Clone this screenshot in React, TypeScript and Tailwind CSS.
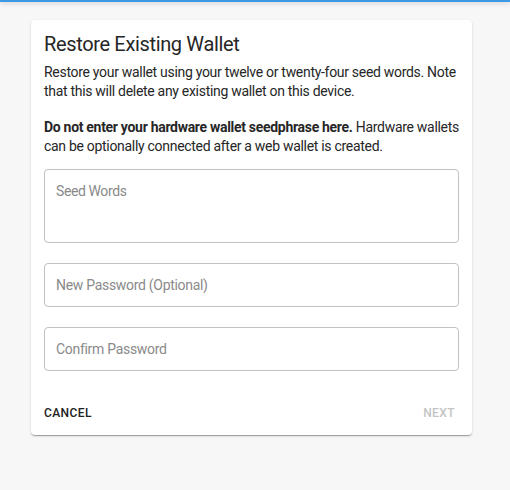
import React from "react";

const fields = [
  { label: "New Password (Optional)", type: "password" },
  { label: "Confirm Password", type: "password" },
];

export default function App() {
  return (
    <div
      className="min-h-[490px] w-[510px] bg-[#f7f7f7] text-[#212121]"
      style={{ fontFamily: "Roboto, 'Noto Sans', sans-serif" }}
    >
      <div className="h-[2px] w-full bg-[#3d98e6] shadow-[0_1px_5px_rgba(0,0,0,0.25)]" />

      <div className="ml-[31px] mt-[18px] w-[441px] rounded-[4px] bg-white px-[13px] pt-[10px] pb-[14px] shadow-[0_2px_1px_-1px_rgba(0,0,0,0.2),0_1px_1px_0_rgba(0,0,0,0.14),0_1px_3px_0_rgba(0,0,0,0.12)]">
        <h1 className="text-[20px] font-normal leading-[28px] tracking-[-0.35px] text-[#262626]">
          Restore Existing Wallet
        </h1>

        <p className="mt-[5px] text-[14px] leading-[19px] tracking-[-0.3px] text-[#262626]">
          Restore your wallet using your twelve or twenty-four seed words. Note
          that this will delete any existing wallet on this device.
        </p>
        <p className="mt-[17px] text-[14px] leading-[19px] tracking-[-0.3px] text-[#262626]">
          <span className="font-bold">
            Do not enter your hardware wallet seedphrase here.
          </span>{" "}
          Hardware wallets can be optionally connected after a web wallet is
          created.
        </p>

        <div className="mt-[13px] flex flex-col gap-[20px]">
          <textarea
            placeholder="Seed Words"
            className="block h-[74px] w-full resize-none rounded-[4px] border border-[#c2c2c2] px-[11px] py-[12px] text-[14px] leading-[19px] tracking-[-0.4px] outline-none placeholder:text-[#8a8a8a]"
          />
          {fields.map((f) => (
            <input
              key={f.label}
              type={f.type}
              placeholder={f.label}
              className="block h-[44px] w-full rounded-[4px] border border-[#c2c2c2] px-[11px] text-[14px] tracking-[-0.3px] outline-none placeholder:text-[#8a8a8a]"
            />
          ))}
        </div>

        <div className="mt-[34px] flex items-center justify-between pr-[4px] text-[12px] font-medium leading-[16px]">
          <button className="uppercase tracking-[0.4px] text-[#212121]">Cancel</button>
          <button className="uppercase tracking-[0.4px] text-[#c4c4c4]" disabled>
            Next
          </button>
        </div>
      </div>
    </div>
  );
}
